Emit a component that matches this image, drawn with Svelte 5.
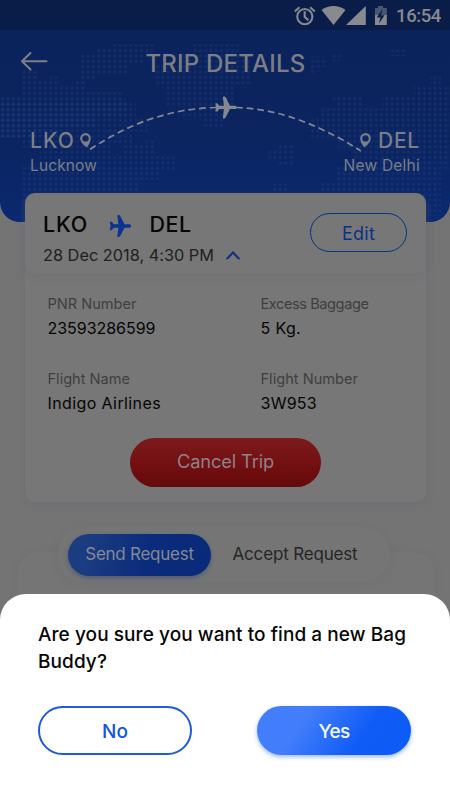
<script>
  // Spreads a label's letters so that it fills the given width.
  function fit(node, width) {
    const natural = node.getBoundingClientRect().width;
    const spacing = (width - natural) / node.textContent.length;
    node.style.letterSpacing = `${spacing.toFixed(3)}px`;
  }

  const details = [
    { label: 'PNR Number', lw: 89, value: '23593286599', vw: 108 },
    { label: 'Excess Baggage', lw: 108, value: '5 Kg.', vw: 40.5 },
    { label: 'Flight Name', lw: 82.5, value: 'Indigo Airlines', vw: 113.5 },
    { label: 'Flight Number', lw: 97.5, value: '3W953', vw: 56.5 }
  ];

  const plane = 'M20.2 9.3c1.2 0 1.9.7 1.9 1.7s-.7 1.7-1.9 1.7h-4.7l-4.4 8.5q-.4.8-1.2.8h-.8q-.9 0-.7-.9l1-8.4H4.8l-1.7 2.1q-.3.4-.8.4H.8L1.6 11 .8 6.8h1.5q.5 0 .8.4l1.7 2.1h4.6l-1-8.4Q8.2 0 9.1 0h.8q.8 0 1.2.8l4.4 8.5z';
  const pin = 'M5.5 0A5.3 5.3 0 0 0 .2 5.3C.2 9 4.6 13.3 7 14.5 8.4 12.4 10.8 8.8 10.8 5.3A5.3 5.3 0 0 0 5.5 0zm0 2.2a3.2 3.2 0 1 1 0 6.4 3.2 3.2 0 0 1 0-6.4z';
</script>

<div class="screen">
  <header>
    <svg class="map" width="450" height="222" viewBox="0 0 450 222">
      <defs>
        <pattern id="dots" width="5.34" height="5.34" patternUnits="userSpaceOnUse">
          <circle cx="2.7" cy="2.7" r="1.6" fill="#29478a" fill-opacity=".3" />
        </pattern>
      </defs>
      <g fill="url(#dots)">
        <path d="M80 52h16v-5h16v-4h42v11h-10v11H128v11H96v5H80zM22 70h16v10h12v-5h10v10h16v-5h10v10h38v11h12v16H96v10H60v10H0V96h22z" />
        <path d="M0 100h126v16h22v16h-16v11h-22v10h-22v11H40v-16H22v-10H0zM22 164h58v-10h43v-11h22v-5h10v16h22v16h-16v10h-22v11h-22v11H22z" />
        <path d="M192 43h49v11h10v32h-16v22h-10v22h-22v-11h-22v-11h-16v-22h-10V65h26V54h11z" />
        <path d="M311 57h16v10h-11v6h-5zM332 55h11v6h-11zM330 97h32v11h20v-11h32V86h16V75h11v11h9v86h-9v44h-40v-22h-80v-11h16v-16h16v-16h-16v-11h-27v-22h11v-11h20z" />
        <path d="M267 150h11v-5h16v20h-16v-5h-11zM272 184h16v10h-16zM390 50h16v6h-16z" />
      </g>
    </svg>

    <div class="status">
      <svg width="112" height="24" viewBox="293 4 112 24" fill="none">
        <g stroke="#858890" stroke-width="2.1">
          <circle cx="304.8" cy="16.6" r="7.6" />
          <path d="M304.7 11.2v5.7l3.7 3.2M294.8 11.5l4.6-4.2M314.8 11.5l-4.6-4.2" />
        </g>
        <path d="M321.5 10c7-5.5 17-5.5 24 0l-12 15z" fill="#888a90" />
        <path d="M346 25h19.8V6z" fill="#888a90" />
        <path d="M375 8h3V6h5v2h3.8v8H375z" fill="#4a566f" />
        <path d="M375 15h11.8v10H375z" fill="#888a90" />
        <path d="m382.5 9-5.8 8.5h3.7l-1.4 6 5.6-8.2h-3.5z" fill="#0a1e48" />
      </svg>
      <span class="clock" use:fit={45}>16:54</span>
    </div>

    <div class="bar">
      <svg width="28" height="20" viewBox="0 0 28 20" fill="none" stroke="#7c7f87" stroke-width="2" stroke-linecap="round" stroke-linejoin="round">
        <path d="M26.5 10.3H2M10.5 2 2 10.3l8.5 8.2" />
      </svg>
      <h1><span use:fit={160}>TRIP DETAILS</span></h1>
    </div>

    <svg class="arc" width="272" height="62" viewBox="89 94 272 62" fill="none">
      <path d="M90 149.5Q150 109 216 107.5M236 107.5Q295 109 361 151" stroke="#858890" stroke-width="1.7" stroke-dasharray="6.7 4" />
      <g transform="translate(214.5 96.4)"><path d={plane} fill="#858890" /></g>
    </svg>

    <div class="route">
      <div class="place">
        <div class="code"><span use:fit={45}>LKO</span>
          <svg width="11" height="15" viewBox="0 0 11 15"><path d={pin} fill="#7c7f87" fill-rule="evenodd" /></svg>
        </div>
        <div class="city"><span use:fit={67}>Lucknow</span></div>
      </div>
      <div class="place end">
        <div class="code">
          <svg class="flip" width="11" height="15" viewBox="0 0 11 15"><path d={pin} fill="#7c7f87" fill-rule="evenodd" /></svg>
          <span use:fit={42}>DEL</span></div>
        <div class="city"><span use:fit={76.5}>New Delhi</span></div>
      </div>
    </div>
  </header>

  <section class="trip">
    <div class="summary">
      <div>
        <div class="codes">
          <span use:fit={45}>LKO</span>
          <svg width="22" height="22" viewBox="0 0 22 22"><path d={plane} fill="#0b3391" /></svg>
          <span use:fit={42}>DEL</span>
        </div>
        <div class="date">
          <span use:fit={171}>28 Dec 2018, 4:30 PM</span>
          <svg width="14" height="9" viewBox="0 0 14 9" fill="none" stroke="#0b2f83" stroke-width="2" stroke-linecap="round"><path d="m1.2 7.5 5.8-6 5.8 6" /></svg>
        </div>
      </div>
      <button class="edit"><span use:fit={33}>Edit</span></button>
    </div>
    <div class="grid">
      {#each details as d}
        <div>
          <div class="label"><span use:fit={d.lw}>{d.label}</span></div>
          <div class="value"><span use:fit={d.vw}>{d.value}</span></div>
        </div>
      {/each}
    </div>
    <button class="cancel"><span use:fit={97}>Cancel Trip</span></button>
  </section>

  <div class="tabs">
    <button class="tab on"><span use:fit={108.5}>Send Request</span></button>
    <button class="tab"><span use:fit={125}>Accept Request</span></button>
  </div>
  <div class="list"></div>

  <div class="sheet">
    <p><span use:fit={368}>Are you sure you want to find a new Bag</span><br /><span use:fit={69}>Buddy?</span></p>
    <div class="actions">
      <button class="no"><span use:fit={26}>No</span></button>
      <button class="yes"><span use:fit={31}>Yes</span></button>
    </div>
  </div>
</div>

<style>
  :global(body) { margin: 0; }
  .screen {
    position: relative; width: 450px; height: 800px; overflow: hidden;
    background: #747474; font-family: Inter, "Liberation Sans", sans-serif; color: #050505;
  }
  .screen * { box-sizing: border-box; }
  span { white-space: nowrap; }
  svg { display: block; flex: none; }
  button { font: inherit; border: 0; padding: 0; margin: 0; display: flex; align-items: center; justify-content: center; }
  header {
    position: relative; height: 222px; overflow: hidden; border-radius: 0 0 20px 20px;
    background: linear-gradient(#0b235b 30px, #0b2562 150px, #0b2970 222px);
  }
  .map { position: absolute; inset: 0; }
  .status {
    position: relative; height: 30px; background: #0a1d49; display: flex; align-items: center;
    justify-content: flex-end; padding: 2px 9px 0 0;
  }
  .status svg { margin-right: -9px; }
  .clock { font: 500 18.5px/28px Roboto, sans-serif; color: #888a90; }
  .bar { position: relative; display: flex; align-items: center; height: 67px; padding: 0 20px; }
  .bar svg { margin-top: -6px; }
  h1 { margin: -1px 0 0 97.5px; font-size: 24px; line-height: 67px; font-weight: 500; color: #7b7e87; }
  .arc { position: absolute; left: 89px; top: 94px; }
  .route { position: relative; display: flex; justify-content: space-between; padding: 30px 30px 0; color: #7b7e87; }
  .code { display: flex; align-items: center; gap: 5px; height: 26px; font-size: 21px; font-weight: 500; }
  .end .code { justify-content: flex-end; gap: 7px; }
  .flip { transform: scaleX(-1); }
  .city { font-size: 15.5px; line-height: 25px; height: 25px; }
  .trip {
    position: relative; width: 401px; height: 309px; margin: -29px 0 0 25px; border-radius: 10px;
    background: #777; box-shadow: 0 2px 9px rgba(92, 98, 118, .3);
  }
  .summary {
    display: flex; justify-content: space-between; height: 80px; padding: 18px 19px 0 18px;
    border-radius: 10px; box-shadow: 0 4px 7px rgba(92, 98, 118, .17);
  }
  .codes { display: flex; align-items: center; height: 28px; font-size: 21.5px; font-weight: 500; }
  .codes svg { margin: 2px 19px 0 20.5px; }
  .codes span { margin-top: -2px; }
  .date { display: flex; align-items: center; gap: 12.5px; height: 32px; font-size: 16.3px; color: #202020; }
  .edit { width: 97px; height: 39px; margin-top: 2px; border: 1.5px solid #0b3184; border-radius: 20px; background: none; color: #0b3184; font-size: 18px; padding-top: 2px; }
  .grid { display: grid; grid-template-columns: 213px 1fr; grid-auto-rows: 75px; padding: 19px 0 0 22.5px; }
  .label { font-size: 14.6px; line-height: 24px; height: 24px; color: #3f3f3f; }
  .value { font-size: 16px; line-height: 25px; height: 25px; color: #050505; }
  .cancel {
    width: 191px; height: 49px; margin: -4px 0 0 105px; border-radius: 25px;
    background: linear-gradient(#7d1a1c, #6f0c0d 70%, #620b0c); color: #8e8284; font-size: 18.3px;
    padding-bottom: 3px;
  }
  .tabs {
    position: relative; z-index: 1; display: flex; align-items: center; width: 333px; height: 55px; margin: 25px 0 0 57px;
    padding-left: 11px; border-radius: 28px; background: #757575; box-shadow: 0 2px 9px rgba(92, 98, 118, .2);
  }
  .tab { background: none; font-size: 17px; color: #252525; height: 42px; margin: 0 0 0 21.5px; padding-bottom: 1px; }
  .on {
    width: 143px; margin: 0; border-radius: 21px; color: #858993;
    background: linear-gradient(105deg, #1b3c80 15%, #0b2c7c 55%, #082a78); box-shadow: 0 2px 4px rgba(30, 55, 115, .45);
  }
  .list { width: 418px; height: 100px; margin: -30px 0 0 17px; border-radius: 22px; background: #757575; box-shadow: 0 0 7px rgba(92, 98, 118, .25); }
  .sheet { position: absolute; z-index: 2; left: 0; top: 594px; width: 450px; height: 206px; padding: 28px 39px 0 38px; background: #fff; border-radius: 26px 26px 0 0; }
  p { margin: 0; font-size: 19px; line-height: 26.5px; font-weight: 500; color: #060606; }
  .actions { display: flex; justify-content: space-between; margin-top: 31px; }
  .no, .yes { width: 154px; height: 49px; border-radius: 25px; font-size: 19px; font-weight: 500; padding-top: 1px; }
  .no { border: 2px solid #1f5bdc; color: #0e55e8; background: #fff; }
  .yes { color: #f5f8ff; background: linear-gradient(125deg, #427dfb 30%, #0f5cf6 68%, #0d5bf7); box-shadow: 0 2px 4px rgba(60, 120, 250, .5); }
</style>
